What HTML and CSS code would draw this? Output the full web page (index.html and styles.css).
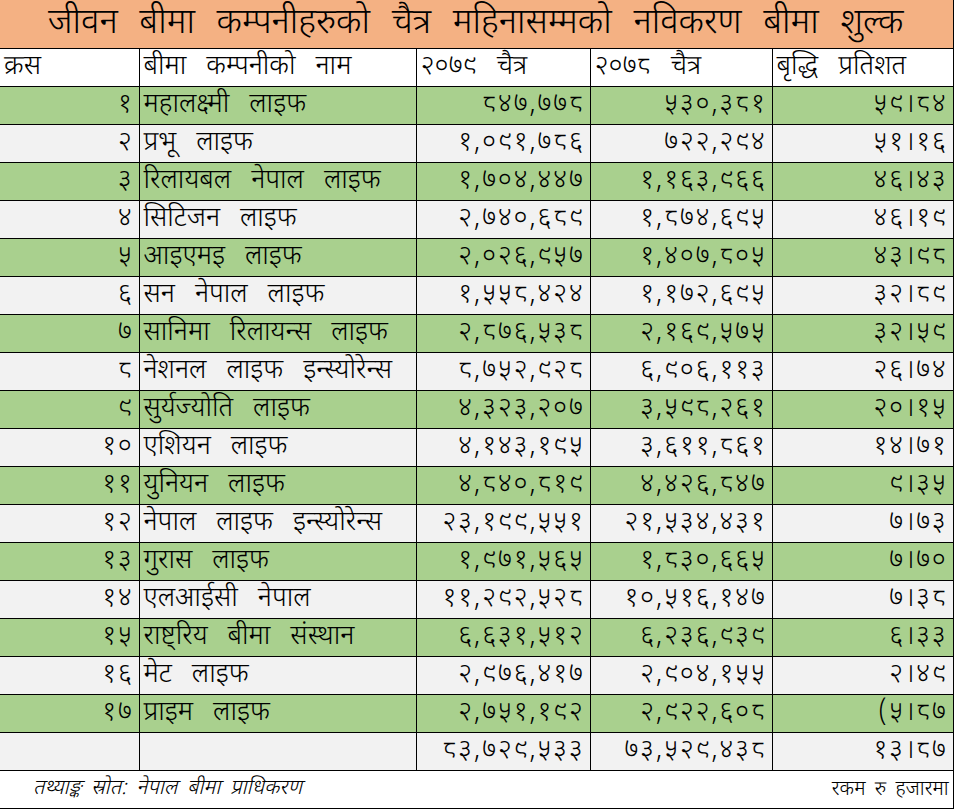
FILE: index.html
```html
<!DOCTYPE html>
<html lang="ne">
<head>
<meta charset="utf-8">
<title>जीवन बीमा कम्पनीहरुको चैत्र महिनासम्मको नविकरण बीमा शुल्क</title>
<link rel="stylesheet" href="styles.css">
</head>
<body>
<table class="sheet">
  <colgroup>
    <col class="c-sn"><col class="c-name"><col class="c-a"><col class="c-b"><col class="c-p">
  </colgroup>
  <thead>
    <tr class="title"><th colspan="5">जीवन बीमा कम्पनीहरुको चैत्र महिनासम्मको नविकरण बीमा शुल्क</th></tr>
    <tr class="head"><th>क्रस</th><th>बीमा कम्पनीको नाम</th><th>२०७९ चैत्र</th><th>२०७८ चैत्र</th><th>बृद्धि प्रतिशत</th></tr>
  </thead>
  <tbody>
    <tr class="g"><td class="num">१</td><td>महालक्ष्मी लाइफ</td><td class="num">८४७,७७८</td><td class="num">५३०,३८१</td><td class="num">५९।८४</td></tr>
    <tr class="w"><td class="num">२</td><td>प्रभू लाइफ</td><td class="num">१,०९१,७८६</td><td class="num">७२२,२९४</td><td class="num">५१।१६</td></tr>
    <tr class="g"><td class="num">३</td><td>रिलायबल नेपाल लाइफ</td><td class="num">१,७०४,४४७</td><td class="num">१,१६३,९६६</td><td class="num">४६।४३</td></tr>
    <tr class="w"><td class="num">४</td><td>सिटिजन लाइफ</td><td class="num">२,७४०,६८९</td><td class="num">१,८७४,६९५</td><td class="num">४६।१९</td></tr>
    <tr class="g"><td class="num">५</td><td>आइएमइ लाइफ</td><td class="num">२,०२६,९५७</td><td class="num">१,४०७,८०५</td><td class="num">४३।९८</td></tr>
    <tr class="w"><td class="num">६</td><td>सन नेपाल लाइफ</td><td class="num">१,५५८,४२४</td><td class="num">१,१७२,६९५</td><td class="num">३२।८९</td></tr>
    <tr class="g"><td class="num">७</td><td>सानिमा रिलायन्स लाइफ</td><td class="num">२,८७६,५३८</td><td class="num">२,१६९,५७५</td><td class="num">३२।५९</td></tr>
    <tr class="w"><td class="num">८</td><td>नेशनल लाइफ इन्स्योरेन्स</td><td class="num">८,७५२,९२८</td><td class="num">६,९०६,११३</td><td class="num">२६।७४</td></tr>
    <tr class="g"><td class="num">९</td><td>सुर्यज्योति लाइफ</td><td class="num">४,३२३,२०७</td><td class="num">३,५९८,२६१</td><td class="num">२०।१५</td></tr>
    <tr class="w"><td class="num">१०</td><td>एशियन लाइफ</td><td class="num">४,१४३,१९५</td><td class="num">३,६११,८६१</td><td class="num">१४।७१</td></tr>
    <tr class="g"><td class="num">११</td><td>युनियन लाइफ</td><td class="num">४,८४०,८१९</td><td class="num">४,४२६,८४७</td><td class="num">९।३५</td></tr>
    <tr class="w"><td class="num">१२</td><td>नेपाल लाइफ इन्स्योरेन्स</td><td class="num">२३,१९९,५५१</td><td class="num">२१,५३४,४३१</td><td class="num">७।७३</td></tr>
    <tr class="g"><td class="num">१३</td><td>गुरास लाइफ</td><td class="num">१,९७१,५६५</td><td class="num">१,८३०,६६५</td><td class="num">७।७०</td></tr>
    <tr class="w"><td class="num">१४</td><td>एलआईसी नेपाल</td><td class="num">११,२९२,५२८</td><td class="num">१०,५१६,१४७</td><td class="num">७।३८</td></tr>
    <tr class="g"><td class="num">१५</td><td>राष्ट्रिय बीमा संस्थान</td><td class="num">६,६३१,५१२</td><td class="num">६,२३६,९३९</td><td class="num">६।३३</td></tr>
    <tr class="w"><td class="num">१६</td><td>मेट लाइफ</td><td class="num">२,९७६,४१७</td><td class="num">२,९०४,१५५</td><td class="num">२।४९</td></tr>
    <tr class="g"><td class="num">१७</td><td>प्राइम लाइफ</td><td class="num">२,७५१,१९२</td><td class="num">२,९२२,६०८</td><td class="num">(५।८७</td></tr>
    <tr class="w"><td></td><td></td><td class="num">८३,७२९,५३३</td><td class="num">७३,५२९,४३८</td><td class="num">१३।८७</td></tr>
  </tbody>
  <tfoot>
    <tr class="foot"><td colspan="5"><div class="foot-in"><span class="src">तथ्याङ्क स्रोत: नेपाल बीमा प्राधिकरण</span><span class="unit">रकम रु हजारमा</span></div></td></tr>
  </tfoot>
</table>
</body>
</html>
```
FILE: styles.css
```css
html, body {
  margin: 0;
  padding: 0;
  background: #ffffff;
}
body {
  font-family: "Noto Sans Devanagari", "Lohit Devanagari", "Noto Sans", sans-serif;
  color: #000;
}
.sheet {
  border-collapse: collapse;
  table-layout: fixed;
  width: 953px;
}
.c-sn { width: 139px; }
.c-name { width: 277px; }
.c-a { width: 174px; }
.c-b { width: 182px; }
.c-p { width: 181px; }

.sheet th, .sheet td {
  border: 1px solid #000;
  padding: 0 5px 0 4px;
  font-weight: 300;
  white-space: nowrap;
  overflow: hidden;
  font-size: 27px;
  line-height: 1;
  word-spacing: 0.48em;
}
.sheet tr > :first-child { border-left: none; }

.title th {
  background: #f4b183;
  height: 48px;
  font-size: 35px;
  border-top: none;
  text-align: center;
  word-spacing: 0.36em;
}
.head th {
  background: #ffffff;
  height: 37px;
  text-align: left;
}
.sheet tbody td { height: 37px; }
.g td { background: #a9d08e; }
.w td { background: #f2f2f2; }
.num {
  text-align: right;
  letter-spacing: 1.7px;
}

.foot td {
  height: 37px;
  background: #fff;
  padding: 0;
}
.foot-in {
  display: flex;
  justify-content: space-between;
  align-items: center;
  padding: 0 4px 0 33px;
  font-size: 21px;
  word-spacing: 0.2em;
}
.src { font-style: italic; }
.unit { font-size: 20px; }
```
